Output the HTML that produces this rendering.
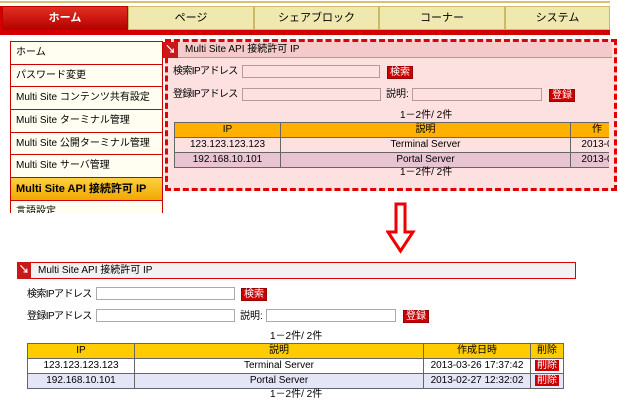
<!DOCTYPE html>
<html><head><meta charset="utf-8"><style>
*{margin:0;padding:0;box-sizing:border-box}
body{width:617px;height:408px;background:#fff;position:relative;overflow:hidden;font-family:"Liberation Sans","Noto Sans CJK JP",sans-serif;font-size:10px;line-height:12px;color:#000}
.a{position:absolute;white-space:nowrap}
.tab{position:absolute;top:6px;height:24px;background:#efe9b0;border:1px solid #c9b96a;text-align:center;line-height:22px;font-size:11px}
.sidewrap{position:absolute;left:10px;top:41px;width:153px;height:172px;overflow:hidden;border:1px solid #c00;border-bottom:none}
.side{height:22.7px;border-bottom:1px solid #c00;background:#fffef0;line-height:22px;padding-left:5px;font-size:10px;white-space:nowrap;overflow:hidden}
.inp{position:absolute;height:13px;border:1px solid #aaa;background:#fff}
.btn{position:absolute;height:13px;background:#c00;color:#fff;font-size:10px;line-height:12px;padding:0 2px;border:1px solid #900}
.lbl{letter-spacing:-0.6px}
table{position:absolute;border-collapse:collapse;font-size:10px;line-height:12px}
td,th{border:1px solid #666;text-align:center;height:15px;font-weight:normal;padding:0;white-space:nowrap;overflow:hidden}
.del{background:#c00;color:#fff;padding:0 2px}
</style></head><body>
<div class="a" style="left:0;top:1px;width:610px;height:2px;background:#d8c070"></div>
<div class="a" style="left:0;top:6px;width:610px;height:29px;background:#d40000"></div>
<div class="tab" style="left:2px;width:126px;background:linear-gradient(#e03020,#b80000);color:#fff;font-weight:bold;border-color:#b00">ホーム</div>
<div class="tab" style="left:128px;width:126px">ページ</div>
<div class="tab" style="left:254px;width:125px">シェアブロック</div>
<div class="tab" style="left:379px;width:126px">コーナー</div>
<div class="tab" style="left:505px;width:105px">システム</div>

<div class="sidewrap">
<div class="side">ホーム</div>
<div class="side">パスワード変更</div>
<div class="side">Multi Site コンテンツ共有設定</div>
<div class="side">Multi Site ターミナル管理</div>
<div class="side">Multi Site 公開ターミナル管理</div>
<div class="side">Multi Site サーバ管理</div>
<div class="side" style="background:linear-gradient(#ffd040,#f0a800);font-weight:bold;font-size:11px">Multi Site API 接続許可 IP</div>
<div class="side">言語設定</div>
</div>

<div class="a" style="left:165px;top:39px;width:452px;height:152px;background:#fde0e0;border:3px dashed #e00000"></div>
<div class="a" style="left:163px;top:42px;width:449px;height:16px;background:#f4caca;border-bottom:1px solid #d88"></div>
<div class="a" style="left:163px;top:42px;width:15px;height:16px;background:#c81818;color:#fff;font-size:11px;line-height:16px;text-align:center;font-weight:bold">↘</div>
<div class="a" style="left:185px;top:44px">Multi Site API 接続許可 IP</div>
<div class="a lbl" style="left:173px;top:66px">検索IPアドレス</div>
<div class="inp" style="left:242px;top:65px;width:138px;background:#fde0e0;border-color:#b99"></div>
<div class="btn" style="left:387px;top:66px">検索</div>
<div class="a lbl" style="left:173px;top:89px">登録IPアドレス</div>
<div class="inp" style="left:242px;top:88px;width:139px;background:#fde0e0;border-color:#b99"></div>
<div class="a" style="left:386px;top:89px">説明:</div>
<div class="inp" style="left:412px;top:88px;width:130px;background:#fde0e0;border-color:#b99"></div>
<div class="btn" style="left:549px;top:89px">登録</div>
<div class="a" style="left:400px;top:110px">1－2件/ 2件</div>
<div class="a" style="left:174px;top:122px;width:435px;height:46px;overflow:hidden">
<table style="left:0;top:0;width:450px">
<tr style="background:#ffb000"><th style="width:106px">IP</th><th style="width:290px">説明</th><th>作</th></tr>
<tr><td>123.123.123.123</td><td>Terminal Server</td><td>2013-0</td></tr>
<tr style="background:#e8c4d2"><td>192.168.10.101</td><td>Portal Server</td><td>2013-0</td></tr>
</table></div>
<div class="a" style="left:400px;top:167px">1－2件/ 2件</div>

<svg class="a" style="left:386px;top:202px" width="30" height="52"><path d="M10 2H19V30H27L14.5 49L2 30H10Z" fill="#fff" stroke="#e00" stroke-width="3"/></svg>

<div class="a" style="left:17px;top:262px;width:559px;height:17px;background:#f2f2f2;border:1px solid #d00"></div>
<div class="a" style="left:17px;top:262px;width:14px;height:17px;background:#c81818;color:#fff;font-size:11px;line-height:17px;text-align:center;font-weight:bold">↘</div>
<div class="a" style="left:38px;top:265px">Multi Site API 接続許可 IP</div>
<div class="a lbl" style="left:27px;top:289px">検索IPアドレス</div>
<div class="inp" style="left:96px;top:287px;width:139px"></div>
<div class="btn" style="left:241px;top:288px">検索</div>
<div class="a lbl" style="left:27px;top:311px">登録IPアドレス</div>
<div class="inp" style="left:96px;top:309px;width:139px"></div>
<div class="a" style="left:240px;top:311px">説明:</div>
<div class="inp" style="left:266px;top:309px;width:130px"></div>
<div class="btn" style="left:403px;top:310px">登録</div>
<div class="a" style="left:270px;top:331px">1－2件/ 2件</div>
<table style="left:27px;top:343px;width:537px">
<tr style="background:#ffcc00"><th style="width:107px">IP</th><th style="width:289px">説明</th><th style="width:107px">作成日時</th><th>削除</th></tr>
<tr><td>123.123.123.123</td><td>Terminal Server</td><td>2013-03-26 17:37:42</td><td><span class="del">削除</span></td></tr>
<tr style="background:#e4e6f8"><td>192.168.10.101</td><td>Portal Server</td><td>2013-02-27 12:32:02</td><td><span class="del">削除</span></td></tr>
</table>
<div class="a" style="left:270px;top:389px">1－2件/ 2件</div>
</body></html>
